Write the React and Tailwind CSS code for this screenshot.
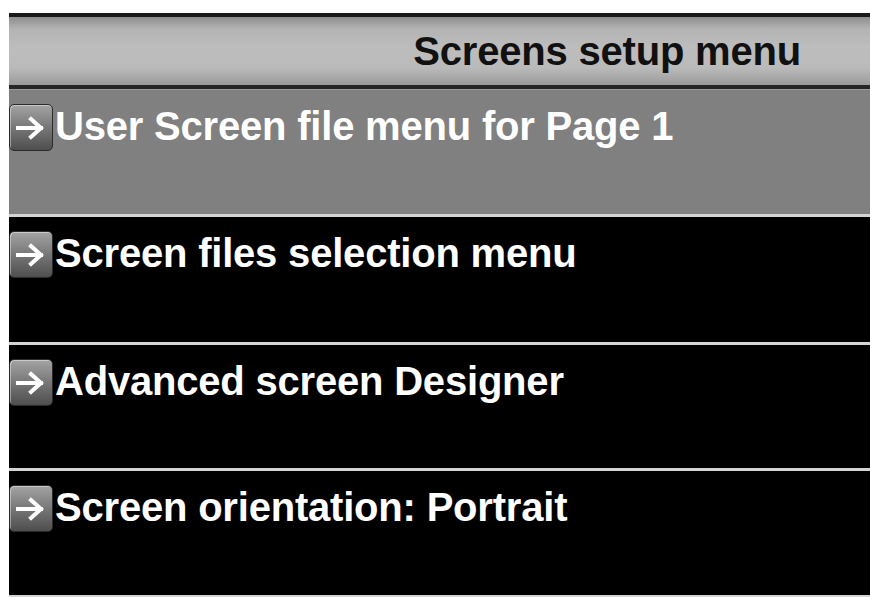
import React from "react";

const items = [
  { label: "User Screen file menu for Page 1", active: true, h: "h-[128px]" },
  { label: "Screen files selection menu", h: "h-[128px]" },
  { label: "Advanced screen Designer", h: "h-[126px]" },
  { label: "Screen orientation: Portrait", h: "h-[127px]" },
];

function ArrowKey() {
  return (
    <div className="w-[44px] h-[47px] shrink-0 rounded-[5px] border border-[#2a2a2a] bg-[linear-gradient(to_bottom,#a4a4a4,#777777_50%,#4e4e4e)] shadow-[inset_1px_1px_0_rgba(255,255,255,0.4)] flex items-center justify-center">
      <svg width="32" height="24" viewBox="0 0 32 24" fill="none">
        <path
          d="M3 12h23M16 3l10 9-10 9"
          stroke="#ffffff"
          strokeWidth="4"
          strokeLinecap="square"
          strokeLinejoin="miter"
        />
      </svg>
    </div>
  );
}

export default function App() {
  return (
    <div className="w-[870px] h-[597px] bg-white overflow-hidden font-['Liberation_Sans',Arial,sans-serif]">
      <div className="ml-[9px] mt-[13px] w-[861px]">
        <div className="h-[76px] border-t-[4px] border-t-[#1a1a1a] border-b-[4px] border-b-[#262626] bg-[linear-gradient(to_bottom,#8e8e8e,#b4b4b4_18%,#bdbdbd_45%,#bababa_75%,#9a9a9a)] flex items-center justify-end pr-[69px]">
          <span className="text-[40px] leading-[40px] font-bold text-[#111] tracking-[-0.2px]">
            Screens setup menu
          </span>
        </div>
        {items.map((it) => (
          <div
            key={it.label}
            className={
              it.h +
              " border-b-[3px] border-b-[#d4d4d4] flex items-start pt-[14px] " +
              (it.active ? "bg-[#808080] border-t border-t-[#9a9a9a]" : "bg-black")
            }
          >
            <ArrowKey />
            <span className="ml-[2px] mt-[2px] text-[40px] leading-[40px] font-bold text-white tracking-[-0.2px]">
              {it.label}
            </span>
          </div>
        ))}
      </div>
    </div>
  );
}
